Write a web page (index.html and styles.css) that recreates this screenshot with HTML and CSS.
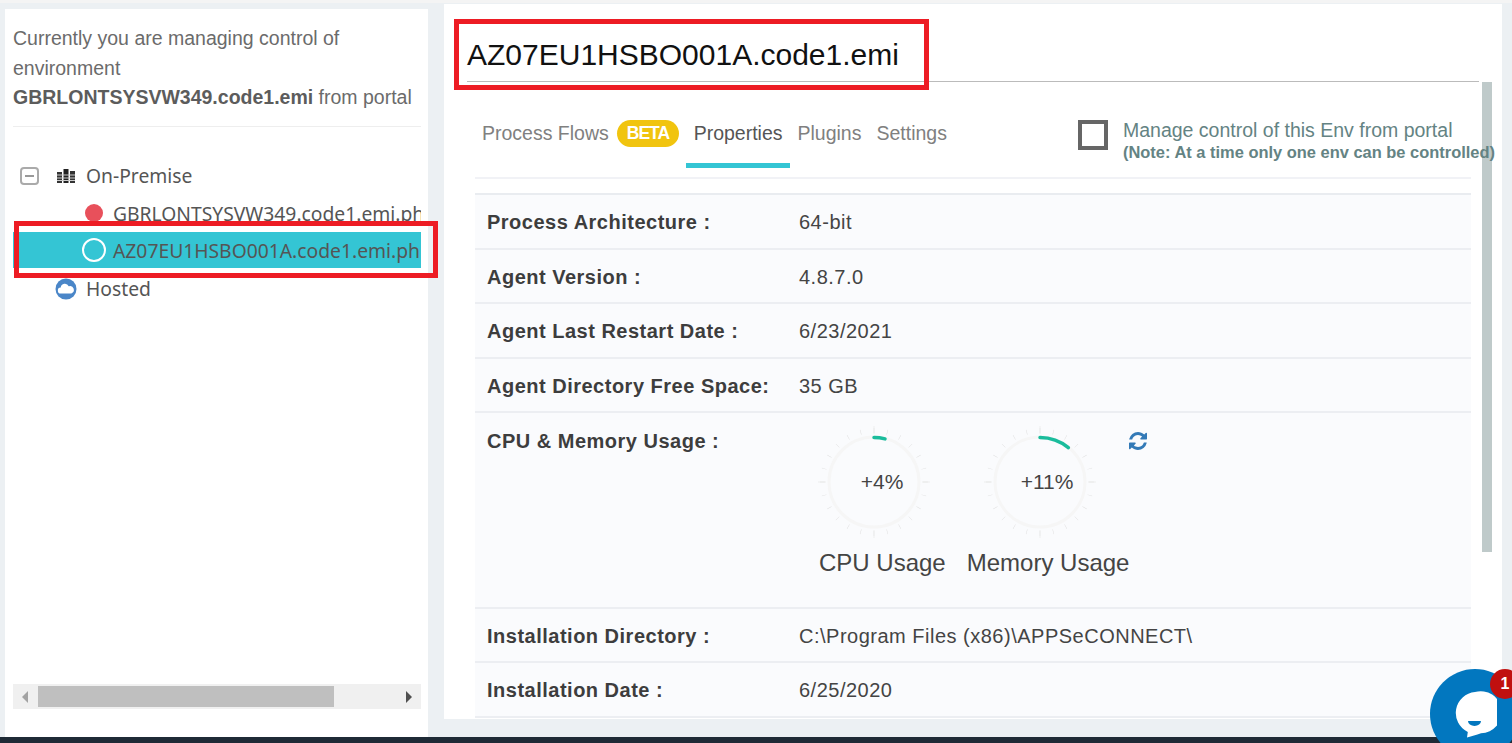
FILE: index.html
```html
<!DOCTYPE html>
<html>
  <head>
    <title>Environment properties</title>
    <link rel="stylesheet" href="styles.css">
  </head>

  <body>
    <div class="topstrip"></div>
    <div class="app">
      <aside class="sidebar">
        <p class="notice">
          Currently you are managing control of environment
          <b>GBRLONTSYSVW349.code1.emi</b> from portal
        </p>
        <ul class="tree">
          <li class="tree-row">
            <span class="toggle"></span>
            <svg class="tree-icon" width="18" height="14" viewBox="0 0 18 14">
              <rect x="0" y="3" width="5" height="11" fill="#333"/>
              <rect x="6.500" y="0" width="5" height="14" fill="#222"/>
              <rect x="13" y="2" width="5" height="12" fill="#333"/>
              <path d="M0 6h18M0 9h18M0 11.500h18" stroke="#ccc" stroke-width="1"/>
            </svg>
            <span>On-Premise</span>
          </li>
          <li class="tree-row tree-child">
            <span class="dot-red"></span>
            <span>GBRLONTSYSVW349.code1.emi.ph</span>
          </li>
          <li class="tree-row tree-child selected">
            <span class="dot-ring"></span>
            <span>AZ07EU1HSBO001A.code1.emi.ph</span>
          </li>
          <li class="tree-row tree-hosted">
            <svg class="cloud" width="22" height="22" viewBox="0 0 22 22">
              <circle cx="11" cy="11" r="10.500" fill="#4a86c8"/>
              <path d="M6 15.500a3 3 0 0 1-.3-6 4.200 4.200 0 0 1 8-1.200 3.600 3.600 0 0 1 2.600 7.200z" fill="#fff"/>
            </svg>
            <span>Hosted</span>
          </li>
        </ul>
        <div class="hscroll">
          <span class="arrow-left"></span>
          <span class="thumb"></span>
          <span class="arrow-right"></span>
        </div>
      </aside>

      <main class="panel">
        <h1 class="title">AZ07EU1HSBO001A.code1.emi</h1>
        <div class="scrollbar"></div>
        <div class="content">
          <div class="tabbar">
            <a class="tab tab-first">Process Flows</a>
            <span class="beta">BETA</span>
            <a class="tab active">Properties</a>
            <a class="tab">Plugins</a>
            <a class="tab">Settings</a>
            <label class="manage">
              <span class="checkbox"></span>
              <span class="manage-text">
                Manage control of this Env from portal
                <b>(Note: At a time only one env can be controlled)</b>
              </span>
            </label>
          </div>

          <div class="props">
            <div class="prop"><div class="prop-label">Process Architecture :</div><div>64-bit</div></div>
            <div class="prop"><div class="prop-label">Agent Version :</div><div>4.8.7.0</div></div>
            <div class="prop"><div class="prop-label">Agent Last Restart Date :</div><div>6/23/2021</div></div>
            <div class="prop"><div class="prop-label">Agent Directory Free Space:</div><div>35 GB</div></div>
            <div class="prop prop-usage">
              <div class="prop-label">CPU &amp; Memory Usage :</div>
              <div class="usage">
                <div class="gauges">
                  <svg class="gauge" width="120" height="120" viewBox="0 0 120 120">
                    <circle class="ticks-minor" cx="60" cy="60" r="51.500" pathLength="24"/>
                    <circle class="ticks-major" cx="60" cy="60" r="52" pathLength="4"/>
                    <circle class="ring" cx="60" cy="60" r="45"/>
                    <circle class="value" cx="60" cy="60" r="44.500" pathLength="100" stroke-dasharray="4 100" transform="rotate(-90 60 60)"/>
                    <text x="68" y="67">+4%</text>
                  </svg>
                  <svg class="gauge" width="120" height="120" viewBox="0 0 120 120">
                    <circle class="ticks-minor" cx="60" cy="60" r="51.500" pathLength="24"/>
                    <circle class="ticks-major" cx="60" cy="60" r="52" pathLength="4"/>
                    <circle class="ring" cx="60" cy="60" r="45"/>
                    <circle class="value" cx="60" cy="60" r="44.500" pathLength="100" stroke-dasharray="11 100" transform="rotate(-90 60 60)"/>
                    <text x="67" y="67">+11%</text>
                  </svg>
                  <svg class="refresh" width="18" height="18" viewBox="128 128 1536 1536">
                    <path d="M1639 1056q0 5-1 7-64 268-268 434.5t-478 166.5q-146 0-282.5-55t-243.5-157l-129 129q-19 19-45 19t-45-19-19-45v-448q0-26 19-45t45-19h448q26 0 45 19t19 45-19 45l-137 137q71 66 161 102t187 36q134 0 250-65t186-179q11-17 53-117 8-23 30-23h192q13 0 22.5 9.5t9.5 22.5zm25-800v448q0 26-19 45t-45 19h-448q-26 0-45-19t-19-45 19-45l138-138q-148-137-349-137-134 0-250 65t-186 179q-11 17-53 117-8 23-30 23h-199q-13 0-22.5-9.5t-9.5-22.5v-7q65-268 270-434.5t480-166.5q146 0 284 55.5t245 156.5l130-129q19-19 45-19t45 19 19 45z" fill="#337ab7"/>
                  </svg>
                </div>
                <div class="gauge-labels">
                  <span>CPU Usage</span>
                  <span>Memory Usage</span>
                </div>
              </div>
            </div>
            <div class="prop"><div class="prop-label">Installation Directory :</div><div>C:\Program Files (x86)\APPSeCONNECT\</div></div>
            <div class="prop"><div class="prop-label">Installation Date :</div><div>6/25/2020</div></div>
          </div>
        </div>
      </main>
    </div>
    <div class="footer"></div>

    <!-- red boxes drawn over the screenshot -->
    <div class="markup markup-tree"></div>
    <div class="markup markup-title"></div>

    <div class="chat">
      <svg width="44" height="48" viewBox="0 0 44 48">
        <path d="M22 1a21 21 0 1 1 6 41.200c-5 1.800-9 3-14 4.300l.8-5.600A21 21 0 0 1 22 1z" fill="#fff"/>
        <path d="M15 30h13a6.500 5 0 0 1-13 0z" fill="#0277bf"/>
      </svg>
    </div>
    <div class="chat-badge">1</div>
  </body>
</html>
```

FILE: styles.css
```css
* {
  box-sizing: border-box;
}
html,
body {
  height: 100%;
}
body {
  margin: 0;
  overflow: hidden;
  display: flex;
  flex-direction: column;
  background-color: #ecf0f3;
  font-family: "Liberation Sans", Arial, sans-serif;
  color: #444;
}
.topstrip {
  height: 3px;
  background-color: #f4f4f4;
}
.footer {
  height: 6px;
  background-color: #1f2a36;
}
.app {
  flex: 1;
  min-height: 0;
  display: flex;
  align-items: flex-start;
  padding-left: 5px;
}

/* left side */
.sidebar {
  width: 423px;
  height: 728px;
  margin-top: 6px;
  padding: 0 7px 0 8px;
  background-color: #fff;
  display: flex;
  flex-direction: column;
}
.notice {
  margin: 0;
  padding: 15px 0 13px;
  font-size: 19.500px;
  line-height: 29.500px;
  color: #6b6b6b;
  border-bottom: 1px solid #eee;
}
.notice b {
  color: #5c5c5c;
}
.tree {
  list-style: none;
  margin: 30.500px 0 0;
  padding: 0;
  font-family: "Noto Sans", sans-serif;
  font-size: 19.300px;
  color: #555;
  overflow: hidden;
}
.tree-row {
  height: 37.500px;
  display: flex;
  align-items: center;
  white-space: nowrap;
  overflow: hidden;
}
.toggle {
  width: 19px;
  height: 18px;
  margin-left: 7px;
  border: 2px solid #aaa;
  border-radius: 4px;
  position: relative;
  flex: none;
}
.toggle::after {
  content: "";
  position: absolute;
  left: 3px;
  right: 3px;
  top: 6px;
  height: 2px;
  background-color: #999;
}
.tree-icon {
  margin-left: 18px;
  margin-right: 11px;
  flex: none;
}
.tree-child {
  padding-left: 72px;
}
.tree-child span:last-child {
  margin-left: 10px;
}
.dot-red {
  width: 18px;
  height: 18px;
  border-radius: 50%;
  background-color: #e8505b;
  flex: none;
}
.dot-ring {
  width: 24px;
  height: 24px;
  margin-left: -3px;
  margin-right: -3px;
  border-radius: 50%;
  border: 2.500px solid #fff;
  flex: none;
}
.selected {
  height: 36px;
  margin-bottom: 2px;
  background-color: #34c5d4;
}
.tree-hosted {
  padding-left: 42px;
}
.cloud {
  margin-right: 9px;
  flex: none;
}
.hscroll {
  margin-top: auto;
  margin-bottom: 28px;
  height: 25px;
  background-color: #f0f0f0;
  display: flex;
  align-items: center;
  position: relative;
}
.thumb {
  width: 296px;
  height: 21px;
  margin-left: 25px;
  background-color: #bfbfbf;
}
.arrow-left,
.arrow-right {
  position: absolute;
  top: 7px;
  border-top: 6px solid transparent;
  border-bottom: 6px solid transparent;
}
.arrow-left {
  left: 9px;
  border-right: 6px solid #a3a3a3;
}
.arrow-right {
  right: 9px;
  border-left: 6px solid #505050;
}

/* right side */
.panel {
  width: 1058px;
  height: 715px;
  margin: 1px 0 0 16px;
  background-color: #fff;
  position: relative;
  overflow: hidden;
}
.title {
  margin: 0 23px;
  padding: 35px 0 8px;
  height: 78px;
  font-size: 30px;
  font-weight: 400;
  line-height: 32px;
  color: #111;
  border-bottom: 1px solid #bbb;
}
.scrollbar {
  position: absolute;
  top: 78px;
  left: 1038px;
  width: 10px;
  height: 470px;
  background-color: #bfcaca;
}
.content {
  margin: 0 31px;
}
.tabbar {
  height: 97px;
  display: flex;
  align-items: flex-start;
  padding: 28px 0 0 7px;
  border-bottom: 2px solid #f1f2f6;
  font-size: 19.500px;
}
.tab {
  color: #808080;
  height: 58px;
  line-height: 46px;
  padding: 0 7.500px;
}
.tab-first {
  padding: 0;
}
.tab.active {
  color: #555;
  border-bottom: 5px solid #34c5d4;
}
.beta {
  margin: 10px 7px 0 8px;
  height: 27px;
  line-height: 27px;
  padding: 0 10px;
  border-radius: 14px;
  background-color: #f1c40f;
  color: #fff;
  font-size: 17.500px;
  font-weight: 700;
  letter-spacing: -1px;
}
.manage {
  margin-left: auto;
  display: flex;
  align-items: flex-start;
  white-space: nowrap;
  color: #648383;
  margin-right: -24px;
  margin-top: 10px;
  position: relative;
}
.checkbox {
  width: 30px;
  height: 30px;
  border: 4px solid #666;
  margin-right: 15px;
  flex: none;
}
.manage-text {
  font-size: 19.500px;
  line-height: 22px;
  display: block;
  margin-top: -1px;
}
.manage-text b {
  display: block;
  font-size: 16.450px;
  line-height: 22px;
}
.props {
  margin-top: 14px;
  border-top: 2px solid #e9ecf0;
  background-color: #fafbfd;
}
.prop {
  height: 54.500px;
  display: flex;
  align-items: center;
  padding: 3px 12px 0;
  border-bottom: 2px solid #eceef2;
  font-size: 20px;
  letter-spacing: 0.500px;
  color: #444;
}
.prop-label {
  width: 312px;
  flex: none;
  font-weight: 700;
  color: #3d3d3d;
}
.prop-usage {
  height: 195.500px;
  align-items: flex-start;
  padding-top: 17px;
}
.usage {
  letter-spacing: 0;
}
.gauges {
  display: flex;
  align-items: flex-start;
  margin: -8px 0 0 15px;
  gap: 46px;
}
.refresh {
  margin: 10px 0 0 -17px;
}
.gauge text {
  font-size: 21px;
  fill: #444;
  text-anchor: middle;
}
.ring {
  fill: none;
  stroke: #f6f6f6;
  stroke-width: 3;
}
.ticks-minor {
  fill: none;
  stroke: #e0e0e0;
  stroke-width: 5;
  stroke-dasharray: 0.035 0.965;
  stroke-dashoffset: 0.017;
}
.ticks-major {
  fill: none;
  stroke: #e0e0e0;
  stroke-width: 8;
  stroke-dasharray: 0.006 0.994;
  stroke-dashoffset: 0.003;
}
.value {
  fill: none;
  stroke: #1abc9c;
  stroke-width: 3.500;
  stroke-linecap: round;
}
.gauge-labels {
  display: flex;
  gap: 21px;
  margin: 7px 0 0 20px;
  font-size: 24px;
  line-height: 28px;
  white-space: nowrap;
}

/* overlays */
.markup {
  position: absolute;
  border: 5px solid #ed1c24;
}
.markup-tree {
  left: 14px;
  top: 221px;
  width: 424px;
  height: 57px;
}
.markup-title {
  left: 454px;
  top: 19px;
  width: 475px;
  height: 71px;
}
.chat {
  position: absolute;
  left: 1430px;
  top: 669px;
  width: 90px;
  height: 90px;
  border-radius: 50%;
  background-color: #0277bf;
  display: flex;
  justify-content: center;
  padding-top: 22px;
}
.chat-badge {
  position: absolute;
  left: 1490px;
  top: 669px;
  width: 30px;
  height: 30px;
  border-radius: 50%;
  background-color: #c0100f;
  color: #fff;
  font-size: 16px;
  font-weight: 700;
  line-height: 30px;
  text-align: center;
}
```
